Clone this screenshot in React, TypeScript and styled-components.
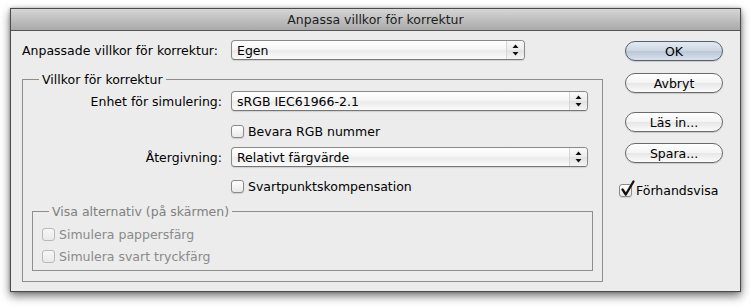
import React from 'react';
import styled, { createGlobalStyle } from 'styled-components';

const GlobalStyle = createGlobalStyle`
  html, body { margin: 0; padding: 0; background: #ffffff; }
  body {
    font-family: "DejaVu Sans", "Liberation Sans", sans-serif;
    font-size: 12.5px;
    color: #000;
  }
  * { box-sizing: border-box; }
`;

const Page = styled.div`
  width: 751px;
  height: 308px;
  padding: 8px 0 0 10px;
`;

const Window = styled.div`
  width: 731px;
  height: 284px;
  border: 1px solid #4a4a4a;
  background: #ececec;
  box-shadow: 0 4px 9px rgba(0, 0, 0, 0.55), 0 0 3px rgba(0, 0, 0, 0.25);
  display: flex;
  flex-direction: column;
`;

const TitleBar = styled.div`
  height: 22px;
  flex: none;
  background: linear-gradient(#d6d6d6, #a9a9a9);
  border-bottom: 1px solid #555;
  display: flex;
  align-items: center;
  justify-content: center;
  color: #1c1c1c;
  line-height: 15px;
`;

const Body = styled.div`
  flex: 1;
  display: flex;
  padding: 9px 17px 0 11px;
`;

const Main = styled.div`
  width: 581px;
  flex: none;
  display: flex;
  flex-direction: column;
`;

const Side = styled.div`
  width: 98px;
  margin-left: 22px;
  flex: none;
  display: flex;
  flex-direction: column;
  padding-top: 1px;
`;

const Row = styled.div<{ $cols: string; $mt?: number }>`
  display: grid;
  grid-template-columns: ${(p) => p.$cols};
  column-gap: 9px;
  align-items: center;
  margin-top: ${(p) => p.$mt ?? 0}px;
`;

const Label = styled.span<{ $align?: 'left' | 'right' }>`
  text-align: ${(p) => p.$align ?? 'right'};
  white-space: nowrap;
  line-height: 15px;
`;

const Group = styled.fieldset<{ $mt?: number; $pb: number }>`
  margin: ${(p) => p.$mt ?? 0}px 0 0 0;
  padding: 0 9px ${(p) => p.$pb}px 9px;
  border: 1px solid #8e8e8e;
  min-width: 0;
`;

const Legend = styled.legend<{ $disabled?: boolean }>`
  padding: 0 3px;
  margin-left: 7px;
  line-height: 15px;
  color: ${(p) => (p.$disabled ? '#808080' : '#000')};
`;

const Popup = styled.div`
  height: 20px;
  border: 1px solid #8a8a8a;
  border-bottom-color: #767676;
  border-radius: 4px;
  background: linear-gradient(#ffffff 0%, #f6f6f6 45%, #ebebeb 55%, #fbfbfb 100%);
  box-shadow: 0 1px 1px rgba(0, 0, 0, 0.12);
  display: flex;
  align-items: center;
  overflow: hidden;
`;

const PopupText = styled.span`
  flex: 1;
  padding-left: 5px;
  line-height: 15px;
  white-space: nowrap;
`;

const PopupArrows = styled.span`
  width: 18px;
  height: 100%;
  flex: none;
  border-left: 1px solid #d6d6d6;
  background: linear-gradient(#f9f9f9 0%, #ececec 50%, #e2e2e2 51%, #f4f4f4 100%);
  display: flex;
  align-items: center;
  justify-content: center;
`;

const CheckRow = styled.label<{ $disabled?: boolean; $ml?: number }>`
  height: 18px;
  display: flex;
  align-items: center;
  gap: 4px;
  margin-left: ${(p) => p.$ml ?? 0}px;
  line-height: 15px;
  white-space: nowrap;
  color: ${(p) => (p.$disabled ? '#8a8a8a' : '#000')};
`;

const Box = styled.span<{ $disabled?: boolean }>`
  position: relative;
  width: 13px;
  height: 13px;
  flex: none;
  border: 1px solid ${(p) => (p.$disabled ? '#b9b9b9' : '#8a8a8a')};
  border-radius: 3px;
  background: ${(p) =>
    p.$disabled
      ? 'linear-gradient(#f7f7f7, #e9e9e9)'
      : 'linear-gradient(#ffffff, #e8e8e8)'};
  box-shadow: ${(p) => (p.$disabled ? 'none' : '0 1px 1px rgba(0,0,0,0.12)')};
`;

const Tick = styled.svg`
  position: absolute;
  left: 0px;
  top: -5px;
  overflow: visible;
`;

const CheckGroupRow = styled.div<{ $mt: number }>`
  margin-top: ${(p) => p.$mt}px;
`;

const Button = styled.button<{ $default?: boolean; $mt?: number }>`
  height: 20px;
  width: 98px;
  margin-top: ${(p) => p.$mt ?? 0}px;
  padding: 0;
  font: inherit;
  line-height: 15px;
  color: #000;
  border: 1px solid ${(p) => (p.$default ? '#566070' : '#6a6a6a')};
  border-radius: 10px;
  background: ${(p) =>
    p.$default
      ? 'linear-gradient(#e4eaf2 0%, #cdd6e2 48%, #bac7d7 52%, #d9e1eb 100%)'
      : 'linear-gradient(#ffffff 0%, #f4f4f4 48%, #e7e7e7 52%, #fbfbfb 100%)'};
  box-shadow: 0 1px 1px rgba(0, 0, 0, 0.15);
`;

const Arrows = () => (
  <svg width="7" height="12" viewBox="0 0 7 12">
    <path d="M3.5 0.5 L6.5 4 L0.5 4 Z" fill="#111" />
    <path d="M0.5 8 L6.5 8 L3.5 11.5 Z" fill="#111" />
  </svg>
);

const Select = ({ value }: { value: string }) => (
  <Popup>
    <PopupText>{value}</PopupText>
    <PopupArrows>
      <Arrows />
    </PopupArrows>
  </Popup>
);

const Check = ({
  label,
  checked,
  disabled,
  ml,
}: {
  label: string;
  checked?: boolean;
  disabled?: boolean;
  ml?: number;
}) => (
  <CheckRow $disabled={disabled} $ml={ml}>
    <Box $disabled={disabled}>
      {checked && (
        <Tick width="15" height="16" viewBox="0 0 15 16">
          <path
            d="M2.5 9.5 L5.8 14.5 L13.5 1.5"
            stroke="#111"
            strokeWidth="2.3"
            fill="none"
            strokeLinecap="round"
            strokeLinejoin="round"
          />
        </Tick>
      )}
    </Box>
    <span>{label}</span>
  </CheckRow>
);

export default function App() {
  const cols = '190px 357px';
  return (
    <>
      <GlobalStyle />
      <Page>
        <Window>
          <TitleBar>Anpassa villkor för korrektur</TitleBar>
          <Body>
            <Main>
              <Row $cols="200px 294px">
                <Label $align="left">Anpassade villkor för korrektur:</Label>
                <Select value="Egen" />
              </Row>
              <Group $mt={12} $pb={10}>
                <Legend>Villkor för korrektur</Legend>
                <Row $cols={cols} $mt={4}>
                  <Label>Enhet för simulering:</Label>
                  <Select value="sRGB IEC61966-2.1" />
                </Row>
                <Row $cols={cols} $mt={11}>
                  <span />
                  <Check label="Bevara RGB nummer" />
                </Row>
                <Row $cols={cols} $mt={7}>
                  <Label>Återgivning:</Label>
                  <Select value="Relativt färgvärde" />
                </Row>
                <Row $cols={cols} $mt={10}>
                  <span />
                  <Check label="Svartpunktskompensation" />
                </Row>
                <Group $mt={9} $pb={5}>
                  <Legend $disabled>Visa alternativ (på skärmen)</Legend>
                  <CheckGroupRow $mt={6}>
                    <Check label="Simulera pappersfärg" disabled />
                  </CheckGroupRow>
                  <CheckGroupRow $mt={4}>
                    <Check label="Simulera svart tryckfärg" disabled />
                  </CheckGroupRow>
                </Group>
              </Group>
            </Main>
            <Side>
              <Button $default>OK</Button>
              <Button $mt={12}>Avbryt</Button>
              <Button $mt={19}>Läs in...</Button>
              <Button $mt={11}>Spara...</Button>
              <CheckGroupRow $mt={18}>
                <Check label="Förhandsvisa" checked ml={-6} />
              </CheckGroupRow>
            </Side>
          </Body>
        </Window>
      </Page>
    </>
  );
}
